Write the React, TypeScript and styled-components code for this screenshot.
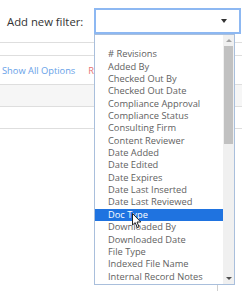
import React from "react"
import styled, { createGlobalStyle } from "styled-components"

const GlobalStyle = createGlobalStyle`
  html, body {
    margin: 0;
    padding: 0;
    background: #ffffff;
  }
  body {
    font-family: "Open Sans", Lato, "Liberation Sans", sans-serif;
  }
`

const options = [
  "",
  "# Revisions",
  "Added By",
  "Checked Out By",
  "Checked Out Date",
  "Compliance Approval",
  "Compliance Status",
  "Consulting Firm",
  "Content Reviewer",
  "Date Added",
  "Date Edited",
  "Date Expires",
  "Date Last Inserted",
  "Date Last Reviewed",
  "Doc Type",
  "Downloaded By",
  "Downloaded Date",
  "File Type",
  "Indexed File Name",
  "Internal Record Notes",
]

const Page = styled.div`
  position: relative;
  width: 242px;
  height: 291px;
  overflow: hidden;
  background: #fff;
  display: flex;
  flex-direction: column;
`
const TopBar = styled.div`
  display: flex;
  align-items: center;
  height: 42px;
  flex-shrink: 0;
  padding: 8px 1px 8px 7px;
  box-sizing: border-box;
  gap: 12px;
`
const Label = styled.span`
  font-size: 11.3px;
  color: #333;
  width: 75px;
  white-space: nowrap;
`
const Select = styled.div`
  flex: 1;
  height: 26px;
  box-sizing: border-box;
  border: 2px solid #8db8f2;
  display: flex;
  justify-content: flex-end;
  align-items: center;
  padding-right: 12px;
  background: #fff;
`
const Row = styled.div<{ $h: number; $bg?: string }>`
  height: ${(p) => p.$h}px;
  flex-shrink: 0;
  box-sizing: border-box;
  border-top: 1px solid #dedede;
  background: ${(p) => p.$bg || "#fff"};
  display: flex;
  align-items: center;
  gap: 13px;
  padding-left: 2px;
  font-size: 9.3px;
`
const Link = styled.span<{ $red?: boolean }>`
  color: ${(p) => (p.$red ? "#e57373" : "#67a1e8")};
`
const Bottom = styled.div`
  flex: 1;
  border-top: 1px solid #dedede;
  display: flex;
  justify-content: flex-end;
  align-items: flex-end;
  padding-right: 24px;
`
const ColLine = styled.div`
  width: 1px;
  height: 8px;
  background: #cfcfcf;
`
const Dropdown = styled.div`
  position: absolute;
  left: 94px;
  top: 34px;
  width: 141px;
  height: 251px;
  box-sizing: border-box;
  border: 1px solid #a9bfdc;
  background: #fff;
  display: flex;
`
const List = styled.div`
  flex: 1;
  padding-top: 1px;
`
const Option = styled.div<{ $active?: boolean }>`
  height: 12.35px;
  line-height: 12.35px;
  padding-left: 13px;
  font-size: 9.3px;
  white-space: nowrap;
  overflow: hidden;
  color: ${(p) => (p.$active ? "#fff" : "#616161")};
  background: ${(p) => (p.$active ? "#1f73e0" : "transparent")};
`
const Scrollbar = styled.div`
  width: 11px;
  background: #f0f0f0;
  display: flex;
  flex-direction: column;
  align-items: center;
`
const Arrow = styled.div<{ $down?: boolean }>`
  height: 11px;
  display: flex;
  align-items: center;
  justify-content: center;
  &::after {
    content: "";
    border-left: 3px solid transparent;
    border-right: 3px solid transparent;
    ${(p) =>
      p.$down
        ? "border-top: 3px solid #505050;"
        : "border-bottom: 3px solid #a3a3a3;"}
  }
`
const Track = styled.div`
  flex: 1;
  width: 100%;
  padding: 0 1px;
  box-sizing: border-box;
`
const Thumb = styled.div`
  height: 98px;
  background: #c1c1c1;
`
const Cursor = styled.svg`
  position: absolute;
  left: 132px;
  top: 213px;
`

const App = (): JSX.Element => {
  return (
    <>
      <GlobalStyle />
      <Page>
        <TopBar>
          <Label>Add new filter:</Label>
          <Select>
            <svg width="6" height="4" viewBox="0 0 6 4">
              <path d="M0 0 L6 0 L3 4 Z" fill="#333" />
            </svg>
          </Select>
        </TopBar>
        <Row $h={13} />
        <Row $h={29}>
          <Link>Show All Options</Link>
          <Link $red>Reset</Link>
        </Row>
        <Row $h={22} $bg="#f6f6f6" />
        <Row $h={22} />
        <Bottom>
          <ColLine />
        </Bottom>
        <Dropdown>
          <List>
            {options.map((o, i) => (
              <Option key={i} $active={o === "Doc Type"}>
                {o}
              </Option>
            ))}
          </List>
          <Scrollbar>
            <Arrow />
            <Track>
              <Thumb />
            </Track>
            <Arrow $down />
          </Scrollbar>
        </Dropdown>
        <Cursor width="10" height="16" viewBox="0 0 10 16">
          <path
            d="M0.5 0.5 L0.5 12 L3.2 9.6 L5.3 14.6 L7 13.9 L5 9 L8.8 9 Z"
            fill="#fff"
            stroke="#222"
            strokeWidth="1"
          />
        </Cursor>
      </Page>
    </>
  )
}
export default App
